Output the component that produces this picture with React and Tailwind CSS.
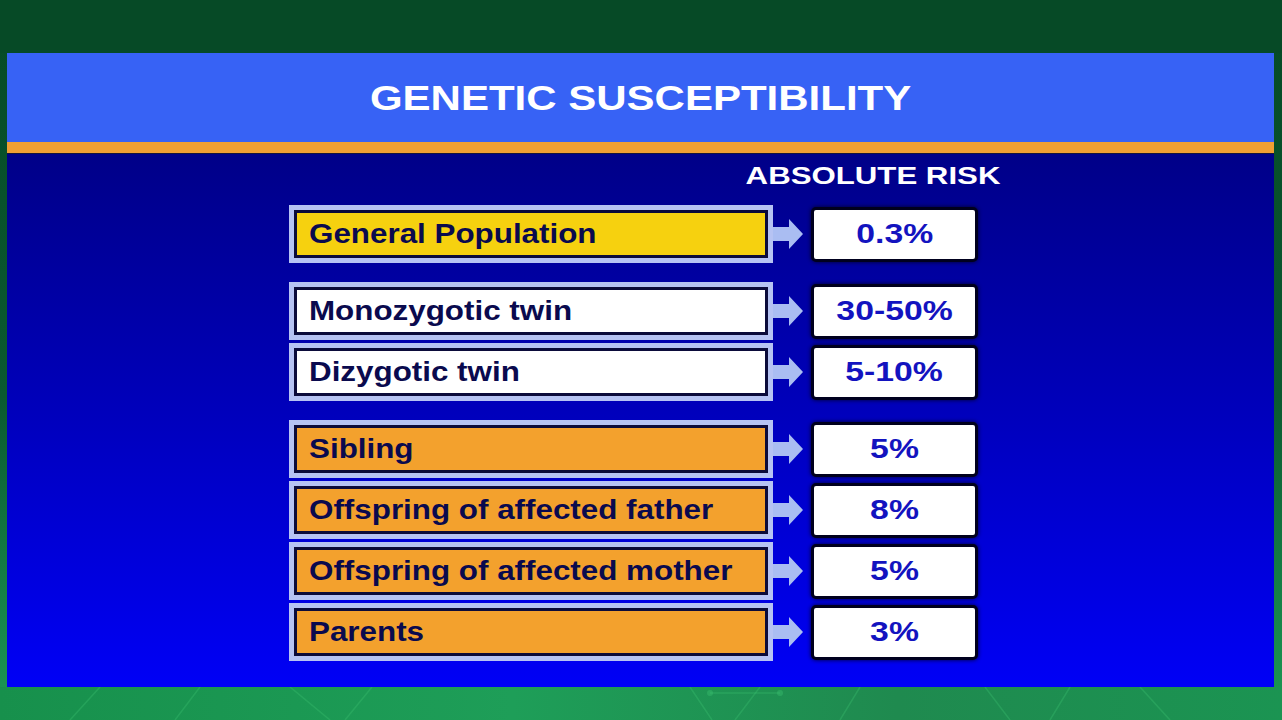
const ROWS = [
  { group: 1, label: 'General Population', value: '0.3%', fill: 'bg-[#f6d10f]' },
  { group: 2, label: 'Monozygotic twin', value: '30-50%', fill: 'bg-white' },
  { group: 2, label: 'Dizygotic twin', value: '5-10%', fill: 'bg-white' },
  { group: 3, label: 'Sibling', value: '5%', fill: 'bg-[#f3a12d]' },
  { group: 3, label: 'Offspring of affected father', value: '8%', fill: 'bg-[#f3a12d]' },
  { group: 3, label: 'Offspring of affected mother', value: '5%', fill: 'bg-[#f3a12d]' },
  { group: 3, label: 'Parents', value: '3%', fill: 'bg-[#f3a12d]' },
]

function Arrow() {
  return (
    <svg width="30" height="30" viewBox="0 0 30 30" className="shrink-0">
      <polygon points="0,8 16,8 16,0 30,15 16,30 16,22 0,22" fill="#aabdf2" />
    </svg>
  )
}

function RiskRow({ row, first, newGroup }) {
  return (
    <div className={`flex items-center ${first ? '' : newGroup ? 'mt-[19px]' : 'mt-[3px]'}`}>
      <div className="w-[484px] h-[58px] p-[5px] bg-[#b6c3f3]">
        <div className={`h-full border-[3px] border-[#0b0b3a] ${row.fill} flex items-center pl-[12px]`}>
          <span className="inline-block origin-left scale-x-[1.12] text-[28px] leading-none font-bold text-[#0a0a4e] whitespace-nowrap">
            {row.label}
          </span>
        </div>
      </div>
      <Arrow />
      <div className="ml-[8px] w-[167px] h-[55px] rounded-[5px] bg-white border-[3px] border-[#00001e] shadow-[0_0_4px_rgba(0,0,30,0.9)] flex items-center justify-center">
        <span className="inline-block scale-x-[1.25] text-[27px] leading-none font-bold text-[#1313bf]">
          {row.value}
        </span>
      </div>
    </div>
  )
}

export default function App() {
  return (
    <div className="w-[1282px] h-[720px] flex flex-col bg-[linear-gradient(180deg,#064a26_0%,#0a5a30_55%,#1c9a55_100%)] font-['Liberation_Sans',Arial,sans-serif] overflow-hidden">
      <div className="h-[53px] shrink-0 bg-[#064a26]" />

      <div className="ml-[7px] w-[1267px] h-[634px] shrink-0 flex flex-col">
        <div className="h-[89px] shrink-0 bg-[#3762f5] flex items-center justify-center">
          <h1 className="inline-block scale-x-[1.2] text-[35px] leading-none font-bold text-white">
            GENETIC SUSCEPTIBILITY
          </h1>
        </div>
        <div className="h-[11px] shrink-0 bg-[#f0a034]" />
        <div className="h-[1px] shrink-0 bg-[#14143c]" />

        <div className="flex-1 bg-[linear-gradient(180deg,#000088_0%,#0000b8_45%,#0000f6_100%)] pt-[7px]">
          <div className="ml-[716px] w-[300px] h-[30px] flex items-center justify-center">
            <span className="inline-block scale-x-[1.3] text-[24px] leading-none font-bold text-white">
              ABSOLUTE RISK
            </span>
          </div>

          <div className="mt-[14px] ml-[282px] flex flex-col">
            {ROWS.map((row, i) => (
              <RiskRow
                key={row.label}
                row={row}
                first={i === 0}
                newGroup={i > 0 && ROWS[i - 1].group !== row.group}
              />
            ))}
          </div>
        </div>
      </div>

      <div className="flex-1 bg-[linear-gradient(90deg,#17904c_0%,#1e9e58_40%,#1f8a4f_70%,#1b9452_100%)]">
        <svg width="1282" height="33" viewBox="0 0 1282 33" className="block">
          <g stroke="#3cc070" strokeOpacity="0.35" strokeWidth="1.5" fill="none">
            <line x1="100" y1="0" x2="70" y2="33" />
            <line x1="200" y1="0" x2="175" y2="33" />
            <line x1="290" y1="0" x2="330" y2="33" />
            <line x1="372" y1="0" x2="345" y2="33" />
            <line x1="690" y1="0" x2="712" y2="33" />
            <line x1="760" y1="0" x2="735" y2="33" />
            <line x1="710" y1="6" x2="780" y2="6" />
            <line x1="860" y1="0" x2="840" y2="33" />
            <line x1="985" y1="0" x2="1010" y2="33" />
            <line x1="1070" y1="0" x2="1050" y2="33" />
            <line x1="1140" y1="0" x2="1170" y2="33" />
          </g>
          <circle cx="710" cy="6" r="3" fill="#3cc070" fillOpacity="0.4" />
          <circle cx="780" cy="6" r="3" fill="#3cc070" fillOpacity="0.4" />
        </svg>
      </div>
    </div>
  )
}
